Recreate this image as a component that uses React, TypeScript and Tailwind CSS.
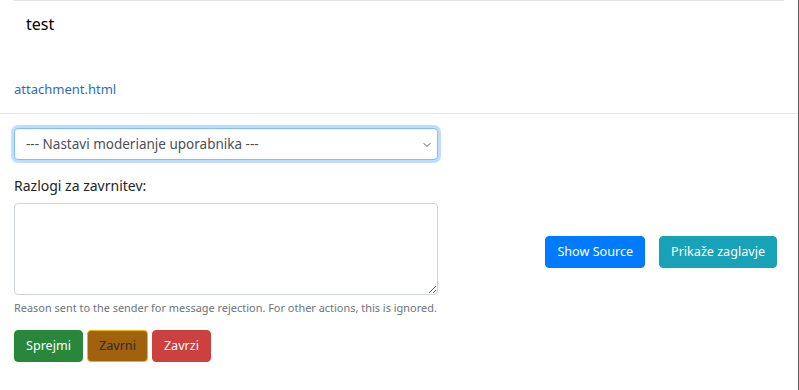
import { ChevronDown } from 'lucide-react'

const FONT = "font-['Noto_Sans',sans-serif]"

function ActionButton({ label, className }: { label: string; className: string }) {
  return (
    <button
      type="button"
      className={`h-[32px] rounded-[4px] border px-[11px] text-[12.6px] leading-none ${className}`}
    >
      {label}
    </button>
  )
}

export default function App() {
  return (
    <div className={`h-[390px] w-[799px] border-r border-[#5a5a5a] bg-white text-[#212529] ${FONT}`}>
      {/* Message body */}
      <div className="mx-[14px] border-t border-[#e5e5e5]">
        <div className="pl-[12px] pt-[12px] text-[16px] leading-[22px] text-black">test</div>
      </div>
      <div className="px-[14px] pt-[41px] pb-[13px]">
        <a href="#" className="text-[13px] leading-[20px] text-[#2a6fb6]">
          attachment.html
        </a>
      </div>

      {/* Moderation form */}
      <div className="border-t border-[#e8e8e8] px-[14px] pt-[14px]">
        <div className="flex">
          <div className="w-[424px]">
            <div className="relative">
              <select className="h-[32px] w-full appearance-none rounded-[4px] border border-[#80bdff] bg-white pl-[11px] text-[13.5px] text-[#495057] shadow-[0_0_0_3px_rgba(0,123,255,0.25)] outline-none">
                <option>--- Nastavi moderianje uporabnika ---</option>
              </select>
              <ChevronDown
                size={12}
                strokeWidth={2}
                className="pointer-events-none absolute right-[5px] top-[11px] text-[#555]"
              />
            </div>

            <label className="mt-[16px] block text-[14px] leading-[20px]">Razlogi za zavrnitev:</label>
            <textarea className="mt-[7px] block h-[92px] w-full rounded-[4px] border border-[#ced4da] outline-none" />
            <p className="mt-[5px] whitespace-nowrap text-[10.95px] leading-[16px] text-[#6c757d]">
              Reason sent to the sender for message rejection. For other actions, this is ignored.
            </p>

            <div className="mt-[14px] flex gap-[4px]">
              <ActionButton label="Sprejmi" className="border-[#28873a] bg-[#28873a] text-white" />
              <ActionButton label="Zavrni" className="border-[#f0b400] bg-[#a0620c] text-[#2b2b2b]" />
              <ActionButton label="Zavrzi" className="border-[#cc4040] bg-[#cc4040] text-white" />
            </div>
          </div>

          <div className="flex flex-1 items-start justify-end gap-[14px] pr-[7px] pt-[108px]">
            <ActionButton label="Show Source" className="border-[#007bff] bg-[#007bff] text-white" />
            <ActionButton label="Prikaže zaglavje" className="border-[#17a2b8] bg-[#17a2b8] text-white" />
          </div>
        </div>
      </div>
    </div>
  )
}
